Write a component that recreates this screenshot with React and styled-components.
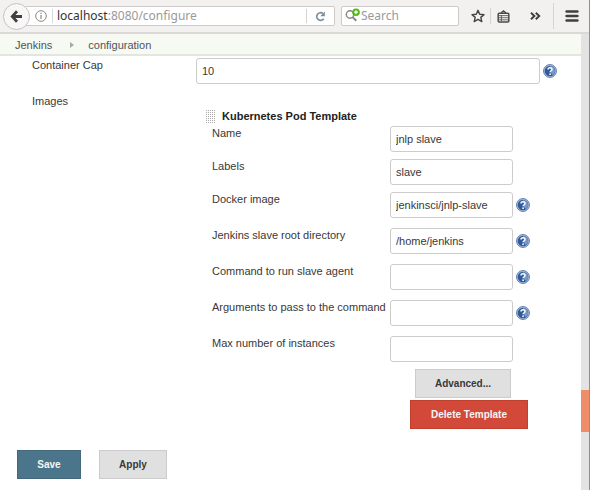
import React from "react";
import styled, { createGlobalStyle } from "styled-components";

const GlobalStyle = createGlobalStyle`
  * { box-sizing: border-box; }
  body {
    margin: 0;
    background: #fff;
    color: #383838;
    font: 11px/14px "Liberation Sans", Arial, sans-serif;
  }
  button, input { font: inherit; color: inherit; }
`;

const Window = styled.div`
  display: flex;
  flex-direction: column;
  min-height: 100vh;
  border-right: 1px solid #8f8f8f;
`;

const Toolbar = styled.header`
  display: flex;
  align-items: center;
  height: 34px;
  padding: 0 0 0 3px;
  background: #f2f1f0;
  border-bottom: 2px solid #dcd8d7;
`;

const BackButton = styled.button`
  display: flex;
  align-items: center;
  justify-content: center;
  flex: none;
  width: 27px;
  height: 27px;
  padding: 0;
  border: 1px solid #c5c2c0;
  border-radius: 50%;
  background: #f8f7f7;
  z-index: 1;
`;

const AddressBar = styled.form`
  display: flex;
  align-items: center;
  flex: 1;
  min-width: 0;
  height: 20px;
  margin-left: -4px;
  padding-left: 9px;
  border: 1px solid #cdc9c7;
  border-left: 0;
  border-radius: 0 2px 2px 0;
  background: #fff;
`;

const Address = styled.div`
  flex: 1;
  min-width: 0;
  margin-left: 5px;
  padding-left: 4px;
  border-left: 1px solid #d8d8d8;
  color: #999;
  font: 12px/14px "Noto Sans", sans-serif;
  white-space: nowrap;
`;

const Host = styled.span`
  color: #333;
`;

const IconButton = styled.button`
  display: flex;
  align-items: center;
  justify-content: center;
  flex: none;
  width: ${(p) => p.$width || 20}px;
  height: ${(p) => p.$height || 26}px;
  padding: 0;
  border: 0;
  border-left: 1px solid ${(p) => (p.$divided ? "#d6d3d2" : "transparent")};
  background: none;
`;

const SearchBox = styled.label`
  display: flex;
  align-items: center;
  flex: none;
  width: 118px;
  height: 20px;
  margin: 0 6px;
  padding-left: 3px;
  border: 1px solid #cdc9c7;
  border-radius: 2px;
  background: #fff;
`;

const SearchInput = styled.input`
  flex: 1;
  min-width: 0;
  height: 16px;
  padding: 0;
  border: 0;
  outline: 0;
  font: 12px/16px "Noto Sans", sans-serif;
  &::placeholder { color: #999; opacity: 1; }
`;

const Viewport = styled.div`
  display: flex;
  flex: 1;
`;

const Page = styled.div`
  flex: 1;
  min-width: 0;
`;

const Breadcrumbs = styled.nav`
  display: flex;
  align-items: center;
  gap: 14px;
  height: 22px;
  padding: 2px 0 0 15px;
  background: #f6faf2;
  border-bottom: 2px solid #e3e6e0;
`;

const Crumb = styled.a`
  color: #4d545d;
  text-decoration: none;
`;

const CrumbArrowIcon = styled.svg`
  margin-left: 4px;
`;

const Config = styled.main`
  display: grid;
  grid-template-columns: 164px 1fr;
  row-gap: 10px;
  padding: 2px 24px 0 32px;
`;

const FieldLabel = styled.label`
  white-space: nowrap;
`;

const SectionLabel = styled.span``;

const CapField = styled.div`
  display: flex;
  align-items: center;
  gap: 3px;
`;

const TextInput = styled.input`
  flex: 1;
  width: 100%;
  min-width: 0;
  height: 26px;
  padding: 0 5px;
  border: 1px solid #ccc;
  border-radius: 3px;
  background: #fff;
  outline: 0;
`;

const HelpButton = styled.button`
  display: flex;
  flex: none;
  width: 14px;
  height: 14px;
  padding: 0;
  border: 0;
  background: none;
`;

const Template = styled.section`
  display: flex;
  flex-direction: column;
  padding: 15px 0 0 10px;
`;

const TemplateHeading = styled.h2`
  display: flex;
  align-items: center;
  gap: 6px;
  margin: 0 0 3px;
  font-size: 11px;
  line-height: 14px;
  color: #222;
`;

const TemplateFields = styled.div`
  display: flex;
  flex-direction: column;
  padding-left: 6px;
`;

const FieldRow = styled.div`
  display: grid;
  grid-template-columns: 178px 123px 17px;
  height: ${(p) => (p.$tall ? 36 : 33)}px;
`;

const FieldControl = styled.div`
  display: flex;
  align-items: center;
  height: 26px;
`;

const HelpCell = styled(FieldControl)`
  padding-left: 3px;
`;

const Button = styled.button`
  height: 29px;
  padding: 0;
  width: ${(p) => p.$width}px;
  border: 1px solid ${(p) => ({ primary: "#44697d", danger: "#c03f2d" }[p.$kind] || "#ccc")};
  background: ${(p) => ({ primary: "#4b758b", danger: "#d24939" }[p.$kind] || "#e0e0e0")};
  color: ${(p) => (p.$kind ? "#f5f5f5" : "#383838")};
  font-size: 10px;
  font-weight: bold;
`;

const TemplateActions = styled.div`
  display: flex;
  flex-direction: column;
  gap: 2px;
  margin-left: 204px;
`;

const AdvancedRow = styled.div`
  display: flex;
  padding-left: 5px;
`;

const FormActions = styled.footer`
  display: flex;
  gap: 18px;
  padding: 21px 17px 11px;
`;

const ScrollTrack = styled.div`
  display: flex;
  flex-direction: column;
  flex: none;
  width: 8px;
  background: #e3e3e3;
`;

const ScrollSpace = styled.div`
  flex: ${(p) => p.$share};
`;

const ScrollThumb = styled.div`
  flex: 42;
  background: #f08d69;
`;

const HelpIcon = () => (
  <svg width="14" height="14" viewBox="0 0 14 14" aria-hidden="true">
    <circle cx="7" cy="7" r="6.4" fill="#b9cae3" stroke="#5775a8" />
    <circle cx="7" cy="7" r="5.3" fill="#2f5a9c" />
    <path d="M7 2a5 5 0 0 1 2.8 9.1L8 9V6Z" fill="#7798c8" />
    <path d="M5 5.5C5 3.2 9 3.2 9 5.4C9 6.8 7.1 6.7 7.1 8.3" fill="none" stroke="#fff" strokeWidth="1.5" />
    <circle cx="7.1" cy="10.2" r=".9" fill="#fff" />
  </svg>
);

const BackIcon = () => (
  <svg width="13" height="13" viewBox="0 0 13 13" fill="none" stroke="#414141" strokeWidth="2.8" aria-hidden="true">
    <path d="M7 1.3 2.3 6.5 7 11.7M2.5 6.5H12" />
  </svg>
);

const InfoIcon = () => (
  <svg width="12" height="12" viewBox="0 0 12 12" fill="none" stroke="#888" aria-hidden="true">
    <circle cx="6" cy="6" r="5.3" />
    <path d="M6 5v4M6 2.8v1.2" strokeWidth="1.2" />
  </svg>
);

const ReloadIcon = () => (
  <svg width="11" height="11" viewBox="0 0 11 11" fill="none" aria-hidden="true">
    <path d="M7.8 2.4A3.8 3.8 0 1 0 8.7 7.7" stroke="#7d8b98" strokeWidth="1.7" />
    <path d="M9.8.6V5.2H5.3Z" fill="#7d8b98" />
  </svg>
);

const SearchIcon = () => (
  <svg width="16" height="16" viewBox="0 0 16 16" fill="none" aria-hidden="true">
    <circle cx="5" cy="6.5" r="3.7" stroke="#858585" strokeWidth="1.4" />
    <path d="m7.6 9.1 3.7 3.7" stroke="#858585" strokeWidth="2" />
    <circle cx="11" cy="4.2" r="3.8" fill="#54b818" />
    <path d="M11 2.2v4M9 4.2h4" stroke="#fff" strokeWidth="1.2" />
  </svg>
);

const StarIcon = () => (
  <svg width="14" height="14" viewBox="0 0 14 14" aria-hidden="true">
    <path d="m7 1.3 1.7 3.9 4.3.4-3.2 2.8 1 4.2L7 10.4l-3.8 2.2 1-4.2L1 5.6l4.3-.4Z" fill="none" stroke="#454545" strokeWidth="1.4" strokeLinejoin="round" />
  </svg>
);

const ClipboardIcon = () => (
  <svg width="13" height="13" viewBox="0 0 13 13" fill="none" stroke="#4a4a4a" aria-hidden="true">
    <rect x="1.2" y="3.2" width="10.6" height="8.8" rx="1" strokeWidth="1.5" />
    <path d="m4 3 2.5-2L9 3" strokeWidth="1.5" />
    <path d="M2 5.6h9M2 7.7h9M2 9.8h9M4.4 5v6" strokeWidth=".8" />
  </svg>
);

const MoreIcon = () => (
  <svg width="11" height="8" viewBox="0 0 11 8" fill="none" stroke="#3c3c3c" strokeWidth="1.9" aria-hidden="true">
    <path d="M1 .8 4.4 4 1 7.2M5.8.8 9.2 4 5.8 7.2" />
  </svg>
);

const MenuIcon = () => (
  <svg width="14" height="12" viewBox="0 0 14 12" stroke="#3f3f3f" strokeWidth="2.6" strokeLinecap="round" aria-hidden="true">
    <path d="M1.6 1.5h10.8M1.6 6h10.8M1.6 10.5h10.8" />
  </svg>
);

const CrumbArrow = () => (
  <CrumbArrowIcon width="4" height="6" viewBox="0 0 4 6" aria-hidden="true">
    <path d="M0 0 4 3 0 6Z" fill="#a9aaa8" />
  </CrumbArrowIcon>
);

const GRIP_ROWS = [0, 1, 2, 3, 4, 5, 6];
const GripIcon = () => (
  <svg width="10" height="13" viewBox="0 0 10 13" stroke="#aaa" strokeDasharray="1 1" aria-hidden="true">
    {GRIP_ROWS.map((row) => (
      <path key={row} d={`M0 ${row * 2 + 0.5}h10`} />
    ))}
  </svg>
);

const FIELDS = [
  { id: "name", label: "Name", value: "jnlp slave" },
  { id: "labels", label: "Labels", value: "slave" },
  { id: "image", label: "Docker image", value: "jenkinsci/jnlp-slave", help: true },
  { id: "root", label: "Jenkins slave root directory", value: "/home/jenkins", help: true },
  { id: "command", label: "Command to run slave agent", value: "", help: true },
  { id: "args", label: "Arguments to pass to the command", value: "", help: true },
  { id: "max", label: "Max number of instances", value: "" },
];

const Help = ({ topic }) => (
  <HelpButton type="button" aria-label={`Help for ${topic}`}>
    <HelpIcon />
  </HelpButton>
);

const TemplateField = ({ id, label, value, help }) => (
  <FieldRow $tall={help}>
    <FieldLabel htmlFor={id}>{label}</FieldLabel>
    <FieldControl>
      <TextInput id={id} defaultValue={value} />
    </FieldControl>
    {help && (
      <HelpCell>
        <Help topic={label} />
      </HelpCell>
    )}
  </FieldRow>
);

export default function App() {
  return (
    <Window>
      <GlobalStyle />
      <Toolbar>
        <BackButton aria-label="Back"><BackIcon /></BackButton>
        <AddressBar>
          <InfoIcon />
          <Address><Host>localhost</Host>:8080/configure</Address>
          <IconButton type="button" $width={28} $height={14} $divided aria-label="Reload"><ReloadIcon /></IconButton>
        </AddressBar>
        <SearchBox>
          <SearchIcon />
          <SearchInput placeholder="Search" aria-label="Search" />
        </SearchBox>
        <IconButton $width={25} aria-label="Bookmark"><StarIcon /></IconButton>
        <IconButton $width={26} $height={16} $divided aria-label="Bookmarks list"><ClipboardIcon /></IconButton>
        <IconButton $width={37} aria-label="More tools"><MoreIcon /></IconButton>
        <IconButton $width={36} $divided aria-label="Menu"><MenuIcon /></IconButton>
      </Toolbar>
      <Viewport>
        <Page>
          <Breadcrumbs aria-label="Breadcrumb">
            <Crumb href="#jenkins">Jenkins</Crumb>
            <CrumbArrow />
            <Crumb href="#configuration">configuration</Crumb>
          </Breadcrumbs>
          <Config>
            <FieldLabel htmlFor="cap">Container Cap</FieldLabel>
            <CapField>
              <TextInput id="cap" defaultValue="10" />
              <Help topic="Container Cap" />
            </CapField>
            <SectionLabel>Images</SectionLabel>
            <Template>
              <TemplateHeading><GripIcon />Kubernetes Pod Template</TemplateHeading>
              <TemplateFields>
                {FIELDS.map((field) => (
                  <TemplateField key={field.id} {...field} />
                ))}
              </TemplateFields>
              <TemplateActions>
                <AdvancedRow>
                  <Button type="button" $width={96}>Advanced...</Button>
                </AdvancedRow>
                <Button type="button" $width={118} $kind="danger">Delete Template</Button>
              </TemplateActions>
            </Template>
          </Config>
          <FormActions>
            <Button type="submit" $width={64} $kind="primary">Save</Button>
            <Button type="button" $width={68}>Apply</Button>
          </FormActions>
        </Page>
        <ScrollTrack>
          <ScrollSpace $share={356} />
          <ScrollThumb />
          <ScrollSpace $share={58} />
        </ScrollTrack>
      </Viewport>
    </Window>
  );
}
